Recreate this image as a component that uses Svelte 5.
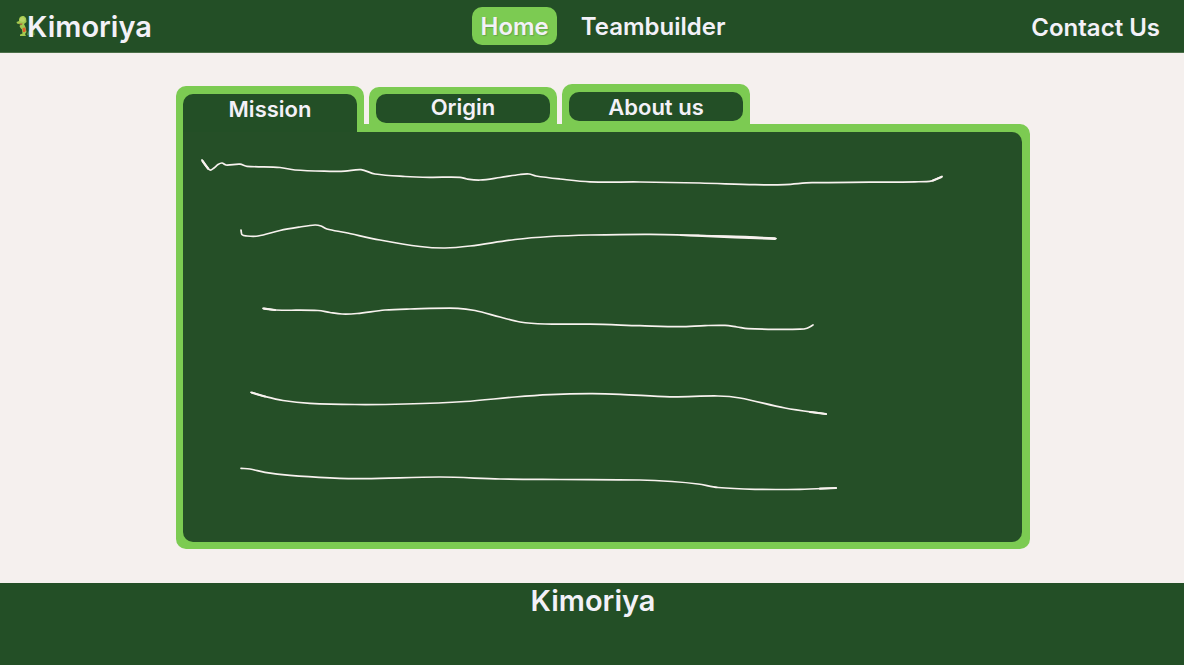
<script>
  const tabs = ['Mission', 'Origin', 'About us'];
  let active = $state('Mission');

  const strokes = [
    [[202,160],[206,166],[210,170],[214,168],[218,164.5],[222,163],[226,165],[240,164.2],[247,166.3],[280,167.5],[295,170],[330,171.3],[345,171.2],[361,169.7],[375,174],[405,176.5],[430,177.3],[460,177.3],[467,179],[480,180],[500,177.5],[520,174.5],[529,174],[536,176],[560,179],[590,181.8],[640,182],[700,183],[755,184.7],[785,184.6],[812,182.7],[870,182.2],[915,181.8],[932,180.8],[942,176.5]],
    [[241,230],[241.8,234.5],[247,236],[258,236],[280,230.5],[300,227],[315,225],[321,226],[327,229],[345,232.5],[380,240],[420,246.5],[445,248],[470,246],[515,239.5],[550,236.5],[590,235],[650,234.3],[700,235.5],[776,238.5]],
    [[263,308.3],[275,310],[318,310.5],[330,312.5],[342,314],[357,313.5],[385,310],[410,309],[458,308.3],[475,310.5],[500,317],[520,322],[545,324],[590,324.2],[640,325.7],[680,326.7],[705,325.6],[725,325.4],[737,327],[748,328.6],[775,329.4],[800,329.2],[807,328.2],[813,325]],
    [[251,392.3],[265,396.5],[283,400.5],[310,403.3],[355,404.5],[405,404],[465,401.5],[515,397],[550,394.7],[590,393.7],[620,394.3],[670,396.8],[718,396],[740,398],[785,408],[826,414]],
    [[241,468.3],[250,469],[265,472.3],[290,475.3],[330,477.8],[365,478.7],[440,477],[500,479],[560,479.5],[640,480],[672,481.5],[698,484],[718,487.5],[755,489.3],[800,489.3],[836,488]]
  ];

  // Catmull-Rom spline through the points, written as cubic Béziers
  function smooth(p) {
    let d = `M${p[0][0]} ${p[0][1]}`;
    for (let i = 0; i < p.length - 1; i++) {
      const a = p[i - 1] ?? p[i], b = p[i], c = p[i + 1], e = p[i + 2] ?? c;
      const t = Math.abs(c[0] - b[0]) / 3;
      const slope = (m, n) => (n[0] === m[0] ? 0 : (n[1] - m[1]) / (n[0] - m[0]));
      d += `C${b[0] + t} ${b[1] + t * slope(a, c)} ${c[0] - t} ${c[1] - t * slope(b, e)} ${c[0]} ${c[1]}`;
    }
    return d;
  }
</script>

<div class="page">
  <header>
    <a class="brand" href="#home">
      <svg class="mascot" viewBox="0 0 19 24" aria-hidden="true">
        <path d="M11 18.500L14 14L18 15.500L19 20L15 21L11 20Z" fill="#4f8437" />
        <path d="M3 4L4 2L6 1H8L10 3L10.500 7L8 9L9.500 12L10.500 17L9 19L10 21H4V19.500L6.500 18.500L6 14.500L4.500 13L3.500 11L5 9.500L1 8.500L0.500 7L3 6Z" fill="#a3c94f" />
        <path d="M4 3.500L6 2L8.500 3L9 6L7 7L3.500 6Z" fill="#b9d466" />
        <path d="M3 8.500L6.500 8.500L6 10L4 9.500Z" fill="#b05a36" />
        <path d="M6.500 13L9 12.500L10 15L9 17L7 17Z" fill="#e0602c" />
      </svg>
      <span>Kimoriya</span>
    </a>
    <nav>
      <a class="current" href="#home">Home</a>
      <a href="#teambuilder">Teambuilder</a>
    </nav>
    <a class="contact" href="#contact">Contact Us</a>
  </header>

  <main>
    <div class="tabs" role="tablist">
      {#each tabs as tab, i}
        <button
          type="button"
          role="tab"
          class={['tab', i === 2 && 'tall']}
          class:active={active === tab}
          aria-selected={active === tab}
          onclick={() => (active = tab)}
        ><span>{tab}</span></button>
      {/each}
    </div>
    <section class="board" role="tabpanel" aria-label={active}>
      <svg viewBox="183 132 839 410" aria-hidden="true">
        {#each strokes as s}
          <path class="line" d={smooth(s)} />
        {/each}
        <g class="heavy">
          <path d="M202.500 161L208 168.500" />
          <path d="M933 180.500L941.500 177" />
          <path d="M264 308.700L275 310" />
          <path d="M252 392.800L265 396.500" />
          <path d="M810 412L826 414" />
          <path d="M820 488.700L836 488" />
        </g>
        <path class="taper" d="M680 234.300L745 235.800L775 237.300Q778 238.700 775 240L735 238.500L680 236Z" />
      </svg>
    </section>
  </main>

  <footer>Kimoriya</footer>
</div>

<style>
  :global(body) {
    margin: 0;
    background: #f5f0ee;
  }
  .page {
    min-height: 100vh;
    display: flex;
    flex-direction: column;
    font-family: Inter, "Noto Sans", sans-serif;
    font-weight: 600;
    color: #f3f1f8;
  }
  header {
    display: grid;
    grid-template-columns: 1fr auto 1fr;
    align-items: center;
    box-sizing: border-box;
    min-height: 53px;
    padding: 0 24px 0 16px;
    background: #234f26;
    border-bottom: 1px solid #4c7049;
    font-size: 24px;
    line-height: 36px;
  }
  a {
    color: inherit;
    text-decoration: none;
  }
  .brand {
    display: flex;
    align-items: center;
    padding-top: 2px;
    font-size: 29px;
  }
  .mascot {
    width: 19px;
    height: 24px;
    margin-right: -8px;
  }
  .brand span {
    position: relative;
  }
  nav {
    display: flex;
    gap: 16px;
    margin-left: 30px;
  }
  nav a {
    padding: 2px 8px 0;
    border-radius: 10px;
  }
  .current {
    background: #7ccb52;
    text-shadow: 1px 1px 1px #4b7f4580;
  }
  .contact {
    justify-self: end;
    padding-top: 4px;
  }
  main {
    flex: 1;
    padding: 31px 154px 34px 176px;
  }
  .tabs {
    display: flex;
    align-items: flex-end;
    gap: 5px;
  }
  .tab {
    position: relative;
    box-sizing: border-box;
    flex: 0 1 188px;
    padding: 7px 7px 1px;
    border: 0;
    border-radius: 10px 10px 0 0;
    background: #7ccb52;
    color: inherit;
    font: inherit;
    font-size: 22px;
    line-height: 29px;
    cursor: pointer;
  }
  .tab span {
    display: block;
    border-radius: 10px;
    background: #234f26;
    line-height: 27px;
    padding-bottom: 2px;
  }
  .tall {
    padding: 8px 7px 3px;
  }
  .tall span {
    padding: 2px 0 0;
  }
  .active {
    padding: 8px 7px 0;
    margin-bottom: -8px;
  }
  .active span {
    border-radius: 10px 10px 0 0;
    line-height: 30px;
    padding: 0 0 8px;
  }
  .board {
    border: solid #7ccb52;
    border-width: 8px 8px 7px 7px;
    border-radius: 0 10px 10px 10px;
    background: #7ccb52;
  }
  .board svg {
    display: block;
    width: 100%;
    height: auto;
    border-radius: 0 10px 10px 10px;
    background: #254f27;
  }
  .line {
    fill: none;
    stroke: #f8f2ef;
    stroke-width: 1.700;
    stroke-linecap: round;
  }
  .heavy {
    fill: none;
    stroke: #f8f2ef;
    stroke-width: 2.200;
    stroke-linecap: round;
  }
  .taper {
    fill: #f8f2ef;
  }
  footer {
    box-sizing: border-box;
    min-height: 82px;
    padding-left: 2px;
    background: #234f26;
    font-size: 29px;
    line-height: 36px;
    text-align: center;
  }
</style>
